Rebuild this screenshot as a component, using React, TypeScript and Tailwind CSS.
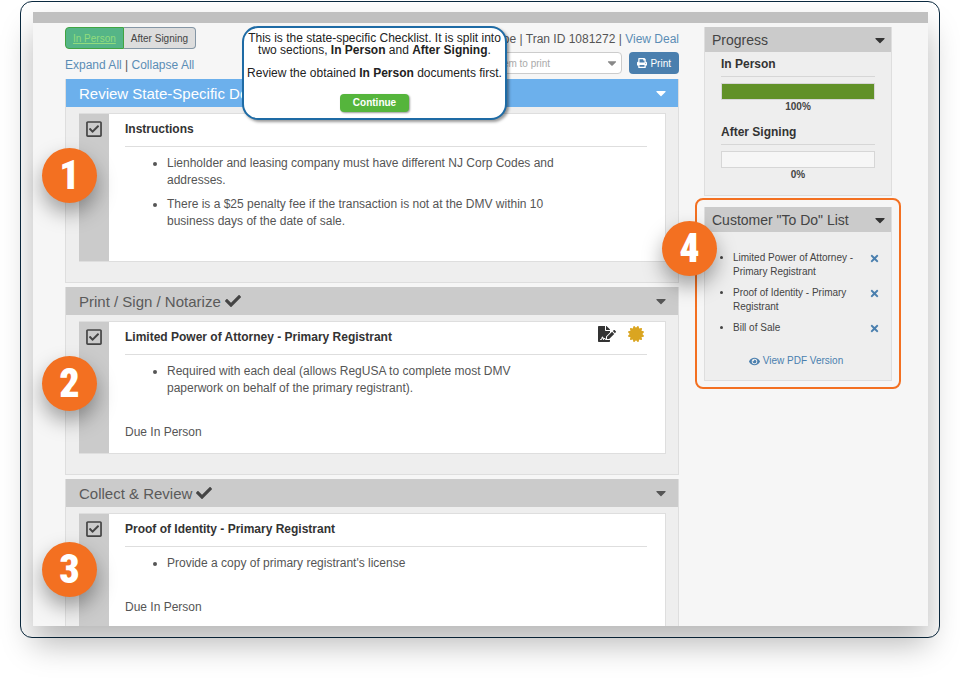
import { useState } from 'react'
import { FaCaretDown, FaCertificate, FaCheck, FaEye, FaFileSignature, FaPrint, FaRegCheckSquare, FaRegSquare, FaTimes } from 'react-icons/fa'

const sections = [
  {
    title: 'Review State-Specific Documents',
    active: true,
    name: 'Instructions',
    notes: [
      'Lienholder and leasing company must have different NJ Corp Codes and addresses.',
      'There is a $25 penalty fee if the transaction is not at the DMV within 10 business days of the date of sale.',
    ],
  },
  {
    title: 'Print / Sign / Notarize',
    done: true,
    name: 'Limited Power of Attorney - Primary Registrant',
    notes: ['Required with each deal (allows RegUSA to complete most DMV paperwork on behalf of the primary registrant).'],
    due: 'Due In Person',
    icons: true,
  },
  {
    title: 'Collect & Review',
    done: true,
    name: 'Proof of Identity - Primary Registrant',
    notes: ["Provide a copy of primary registrant's license"],
    due: 'Due In Person',
    last: true,
  },
]

const todos = ['Limited Power of Attorney - Primary Registrant', 'Proof of Identity - Primary Registrant', 'Bill of Sale']

function Badge({ n, className }: { n: number; className: string }) {
  return (
    <span className={`absolute z-10 flex size-[55px] items-center justify-center rounded-full bg-[#f37021] font-['Liberation_Sans_Narrow','Roboto_Condensed','Liberation_Sans',sans-serif] text-[40px] leading-none font-black text-white shadow-[0_10px_20px_rgba(0,0,0,0.35)] ${className}`}>
      {n}
    </span>
  )
}

function Section({ s, index }: { s: any; index: number }) {
  const [checked, setChecked] = useState(true)
  const id = `doc-${index}`
  return (
    <section className={`relative border-x border-[#dedede] bg-[#eee] ${s.last ? '' : 'border-b pb-5'}`}>
      <h2 className={`flex h-7 items-center justify-between pr-[9px] pl-[13px] text-[15px] ${s.active ? 'bg-[#6cb0ec] text-white' : 'bg-[#cbcbcb] text-[#5a5a5a]'}`}>
        <span className="flex items-center gap-1">
          {s.title}
          {s.done && <FaCheck className="size-4 text-[#444]" />}
        </span>
        <button type="button" aria-label={`Toggle ${s.title}`}>
          <FaCaretDown className={`size-4 ${s.active ? 'text-white' : 'text-[#555]'}`} />
        </button>
      </h2>
      <div className={`mt-1.5 mr-3 ml-[13px] flex border-[#dedede] bg-white ${s.last ? 'border-t border-r' : 'border-y border-r'}`}>
        <div className="flex w-[30px] shrink-0 justify-center bg-[#cbcbcb] pt-1.5">
          <span className="relative size-[18px] text-[#444]">
            <input id={id} type="checkbox" checked={checked} onChange={e => setChecked(e.target.checked)} className="absolute inset-0 size-full appearance-none" />
            {checked ? <FaRegCheckSquare className="pointer-events-none size-[18px]" /> : <FaRegSquare className="pointer-events-none size-[18px]" />}
          </span>
        </div>
        <div className={`min-w-0 flex-1 pt-[7px] pr-[18px] pl-4 ${s.last ? 'pb-[10px]' : s.due ? 'pb-3' : 'pb-[31px]'}`}>
          <div className="flex h-[26px] justify-between border-b border-[#dedede]">
            <label htmlFor={id} className="leading-4 font-bold text-[#333]">{s.name}</label>
            {s.icons && (
              <span className="-mt-1 flex items-center gap-3 self-start pr-[3px]">
                <FaFileSignature className="size-[18px] text-[#333]" />
                <FaCertificate className="size-4 text-[#daa520]" />
              </span>
            )}
          </div>
          <ul className="mt-2 max-w-[430px] list-disc space-y-[7px] pl-[42px]">
            {s.notes.map((t: string) => <li key={t}>{t}</li>)}
          </ul>
          {s.due && <p className="mt-[27px]">{s.due}</p>}
        </div>
      </div>
      <Badge n={index + 1} className={s.last ? '-left-6 top-[63px]' : '-left-6 top-[69px]'} />
    </section>
  )
}

function Meter({ label, value }: { label: string; value: number }) {
  return (
    <div className="mb-[11px]">
      <h3 className="border-b border-[#d6d6d6] pb-[3px] font-bold text-[#333]">{label}</h3>
      <div className="mt-1.5 h-[17px] border border-[#d6d6d6] bg-[#f6f6f6]">
        <div className="h-full bg-[#619128]" style={{ width: `${value}%` }} />
      </div>
      <div className="text-center text-[10px] leading-[13px] font-bold text-[#444]">{value}%</div>
    </div>
  )
}

function PanelHead({ title }: { title: string }) {
  return (
    <h2 className="flex h-[25px] items-center justify-between bg-[#cbcbcb] pr-[3px] pl-[7px] text-sm text-[#444]">
      {title}
      <button type="button" aria-label={`Toggle ${title}`}><FaCaretDown className="size-4 text-[#333]" /></button>
    </h2>
  )
}

export default function App() {
  return (
    <div className="min-h-screen bg-white px-5 pt-px font-['Liberation_Sans',Arial,sans-serif] text-xs leading-[17px] text-[#555]">
      <div className="rounded-xl border border-[#0b2a40] pt-2.5 pr-[11px] pb-[11px] pl-3">
        <main className="relative bg-[#f6f6f6] shadow-[0_18px_30px_rgba(0,0,0,0.28)]">
          <div className="h-[11px] bg-[#c0c0c0]" />
          <div className="flex items-start gap-[25px] pt-1 pr-9 pl-8">
            <div className="min-w-0 flex-1">
              <div className="flex h-[22px] items-center justify-between">
                <div className="flex h-[22px] text-[10px]">
                  <button type="button" className="rounded-l-sm border border-[#41a341] bg-[#55b587] px-[7px] text-[#92dc7d] underline">In Person</button>
                  <button type="button" className="rounded-r border border-l-0 border-[#8496a5] bg-[#ddd] px-[7px] text-[#444]">After Signing</button>
                </div>
                <p className="pt-0.5">Jane Doe | Tran ID 1081272 | <a href="#deal" className="text-[#5b8db5]">View Deal</a></p>
              </div>
              <div className="mt-[3px] mb-[5px] flex h-[22px] items-center justify-between">
                <p className="pt-1"><a href="#expand" className="text-[#5b8db5]">Expand All</a> | <a href="#collapse" className="text-[#5b8db5]">Collapse All</a></p>
                <div className="flex gap-[7px] text-[10px]">
                  <label className="relative">
                    <select aria-label="Item to print" className="h-[22px] w-44 appearance-none rounded-sm border border-[#ccc] bg-white px-1.5 text-[#aaa]">
                      <option>Select an item to print</option>
                    </select>
                    <FaCaretDown className="pointer-events-none absolute top-1 right-[3px] size-3.5 text-[#888]" />
                  </label>
                  <button type="button" className="flex h-[22px] items-center gap-[3px] rounded-sm bg-[#4a7fae] px-2 text-white">
                    <FaPrint className="size-[10px]" /> Print
                  </button>
                </div>
              </div>
              <div className="space-y-1">
                {sections.map((s, i) => <Section key={s.title} s={s} index={i} />)}
              </div>
            </div>

            <aside className="w-[188px] shrink-0">
              <div className="border border-t-0 border-[#dedede] bg-[#eee] pb-[3px]">
                <PanelHead title="Progress" />
                <div className="px-4 pt-1">
                  <Meter label="In Person" value={100} />
                  <Meter label="After Signing" value={0} />
                </div>
              </div>

              <div className="relative mt-[11px] border border-t-0 border-[#dedede] bg-[#eee] pb-3">
                <PanelHead title={'Customer "To Do" List'} />
                <ul className="space-y-[7px] pt-[19px] pr-[11px] pl-7 text-[10px] leading-[14px] text-[#444]">
                  {todos.map(t => (
                    <li key={t} className="flex justify-between">
                      <span className="list-item w-32 list-disc">{t}</span>
                      <button type="button" aria-label={`Remove ${t}`} className="flex h-[14px] items-center"><FaTimes className="size-[11px] text-[#4a7fae]" /></button>
                    </li>
                  ))}
                </ul>
                <a href="#pdf" className="mt-[19px] flex items-center justify-center gap-[3px] pr-1 text-[10px] leading-[14px] text-[#4a7fae]">
                  <FaEye className="size-[11px]" /> View PDF Version
                </a>
                {/* callout outline */}
                <div className="pointer-events-none absolute -inset-x-[10px] -inset-y-[9px] rounded-lg border-2 border-[#f37021]" />
                <Badge n={4} className="top-[14px] -left-[43px]" />
              </div>
            </aside>
          </div>

          {/* walkthrough tip */}
          <div role="dialog" aria-label="Checklist tip" className="absolute top-[14px] left-[209px] z-20 flex h-[94px] w-[265px] flex-col items-center rounded-2xl border-2 border-[#1e6ba5] bg-white pt-1 text-center leading-3 text-[#222] shadow-[2px_2px_3px_rgba(0,0,0,0.4)]">
            <p className="whitespace-nowrap">This is the state-specific Checklist. It is split into<br />two sections, <b>In Person</b> and <b>After Signing</b>.</p>
            <p className="mt-[11px] whitespace-nowrap">Review the obtained <b>In Person</b> documents first.</p>
            <button type="button" className="mt-[15px] h-[18px] w-[69px] rounded-sm bg-[#55b53c] text-[10px] font-bold text-white shadow-[1px_1px_2px_rgba(0,0,0,0.4)]">Continue</button>
          </div>
        </main>
      </div>
    </div>
  )
}
